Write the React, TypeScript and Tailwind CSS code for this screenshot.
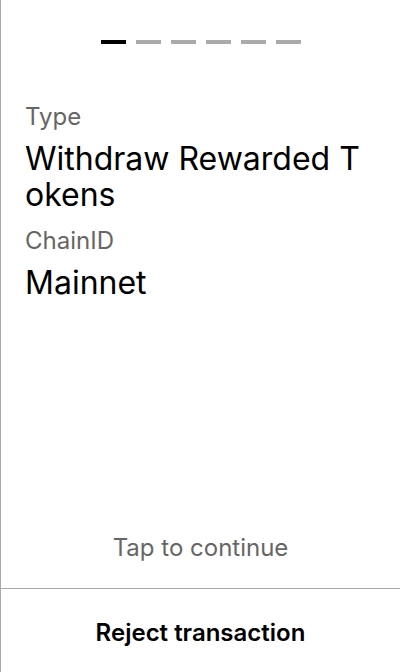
import React from "react";

const STEPS = 6;

export default function App() {
  return (
    <div
      className="flex h-[672px] w-[400px] flex-col border-l border-[#aaaaaa] bg-white text-black"
      style={{ fontFamily: "Inter, 'Noto Sans', sans-serif" }}
    >
      <div className="flex justify-center gap-[10px] pt-10">
        {Array.from({ length: STEPS }).map((_, i) => (
          <div key={i} className={`h-1 w-[25px] ${i === 0 ? "bg-black" : "bg-[#aaaaaa]"}`} />
        ))}
      </div>

      <div className="mt-[59px] flex flex-col gap-[14px] pl-6 pr-6">
        <div>
          <p className="mb-[10px] text-2xl leading-7 text-[#666666]">Type</p>
          <p className="break-all text-[32px] leading-9">Withdraw Rewarded Tokens</p>
        </div>
        <div>
          <p className="mb-[10px] text-2xl leading-7 text-[#666666]">ChainID</p>
          <p className="break-all text-[32px] leading-9">Mainnet</p>
        </div>
      </div>

      <div className="mt-auto flex flex-col">
        <p className="pb-[26px] text-center text-2xl leading-7 text-[#666666]">Tap to continue</p>
        <button
          type="button"
          className="h-[84px] w-full border-t border-[#aaaaaa] pt-1 text-center text-2xl font-semibold"
        >
          Reject transaction
        </button>
      </div>
    </div>
  );
}
